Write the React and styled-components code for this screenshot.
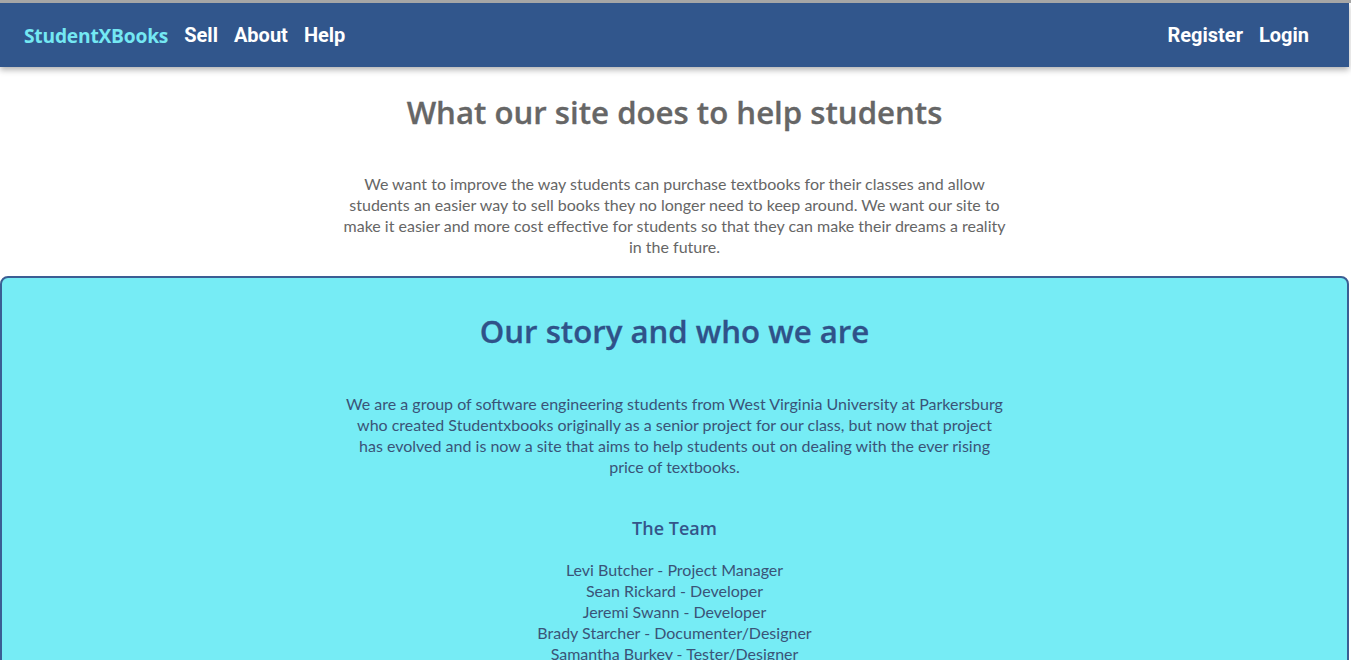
import styled, { createGlobalStyle } from 'styled-components';

const GlobalStyle = createGlobalStyle`
    html, body {
        margin: 0;
        padding: 0;
        background: #ffffff;
    }

    body {
        border-top: 3px solid #a6a6a6;
        font-family: "Segoe UI", "Lato", "Noto Sans", sans-serif;
    }

    * {
        box-sizing: border-box;
    }
`;

const team = [
    'Levi Butcher - Project Manager',
    'Sean Rickard - Developer',
    'Jeremi Swann - Developer',
    'Brady Starcher - Documenter/Designer',
    'Samantha Burkey - Tester/Designer',
];

export default function App() {
    return (
        <>
            <GlobalStyle />
            <Page>
                <NavBar>
                    <NavGroup>
                        <Brand href="#">StudentXBooks</Brand>
                        <NavLink href="#">Sell</NavLink>
                        <NavLink href="#">About</NavLink>
                        <NavLink href="#">Help</NavLink>
                    </NavGroup>
                    <NavGroup>
                        <NavLink href="#">Register</NavLink>
                        <NavLink href="#">Login</NavLink>
                    </NavGroup>
                </NavBar>

                <Intro>
                    <Heading>What our site does to help students</Heading>
                    <Text $width={674}>
                        We want to improve the way students can purchase textbooks for their classes and allow
                        students an easier way to sell books they no longer need to keep around. We want our site to
                        make it easier and more cost effective for students so that they can make their dreams a reality
                        in the future.
                    </Text>
                </Intro>

                <StoryCard>
                    <Heading $story>Our story and who we are</Heading>
                    <Text $story $width={660}>
                        We are a group of software engineering students from West Virginia University at Parkersburg
                        who created Studentxbooks originally as a senior project for our class, but now that project
                        has evolved and is now a site that aims to help students out on dealing with the ever rising
                        price of textbooks.
                    </Text>
                    <TeamTitle>The Team</TeamTitle>
                    <TeamList>
                        {team.map((member) => (
                            <li key={member}>{member}</li>
                        ))}
                    </TeamList>
                </StoryCard>
            </Page>
        </>
    );
}

const Page = styled.div`
    margin-right: 2px;
`;

const NavBar = styled.nav`
    height: 64px;
    background-color: #31568c;
    box-shadow: 0 3px 6px rgba(0, 0, 0, 0.3);
    display: flex;
    align-items: center;
    justify-content: space-between;
    padding: 0 40px 0 24px;
    position: relative;
    z-index: 1;
`;

const NavGroup = styled.div`
    display: flex;
    align-items: center;
    gap: 16px;
`;

const Brand = styled.a`
    font-family: "Segoe UI", "Open Sans", "Noto Sans", sans-serif;
    font-weight: 700;
    font-size: 19.2px;
    color: #74e8f3;
    text-decoration: none;
    letter-spacing: -0.2px;
`;

const NavLink = styled.a`
    font-family: Roboto, "Liberation Sans", sans-serif;
    font-weight: 700;
    font-size: 20px;
    color: #ffffff;
    text-decoration: none;
`;

const Intro = styled.section`
    padding: 26px 0 19px;
    display: flex;
    flex-direction: column;
    align-items: center;
`;

const Heading = styled.h1`
    margin: 0;
    font-family: "Segoe UI", "Open Sans", "Noto Sans", sans-serif;
    font-weight: 600;
    font-size: 31.2px;
    line-height: 38px;
    color: ${(p) => (p.$story ? '#2f5289' : '#666666')};
    text-align: center;
    -webkit-text-stroke: 0.3px currentColor;
`;

const Text = styled.p`
    margin: ${(p) => (p.$story ? '43px' : '42px')} 0 0;
    width: ${(p) => p.$width}px;
    font-family: "Segoe UI", "Lato", "Noto Sans", sans-serif;
    font-size: 16px;
    line-height: 21px;
    color: ${(p) => (p.$story ? '#3a5478' : '#666666')};
    text-align: center;
`;

const StoryCard = styled.section`
    background-color: #76ecf5;
    border: 2px solid #3b5e94;
    border-radius: 8px;
    padding: 34px 0 0;
    display: flex;
    flex-direction: column;
    align-items: center;
    min-height: 420px;
`;

const TeamTitle = styled.h3`
    margin: 39px 0 0;
    font-family: "Segoe UI", "Open Sans", "Noto Sans", sans-serif;
    font-weight: 600;
    font-size: 18px;
    line-height: 24px;
    color: #34558a;
`;

const TeamList = styled.ul`
    list-style: none;
    margin: 19px 0 0;
    padding: 0;
    font-family: "Segoe UI", "Lato", "Noto Sans", sans-serif;
    font-size: 16px;
    line-height: 21px;
    color: #3a5478;
    text-align: center;
`;
